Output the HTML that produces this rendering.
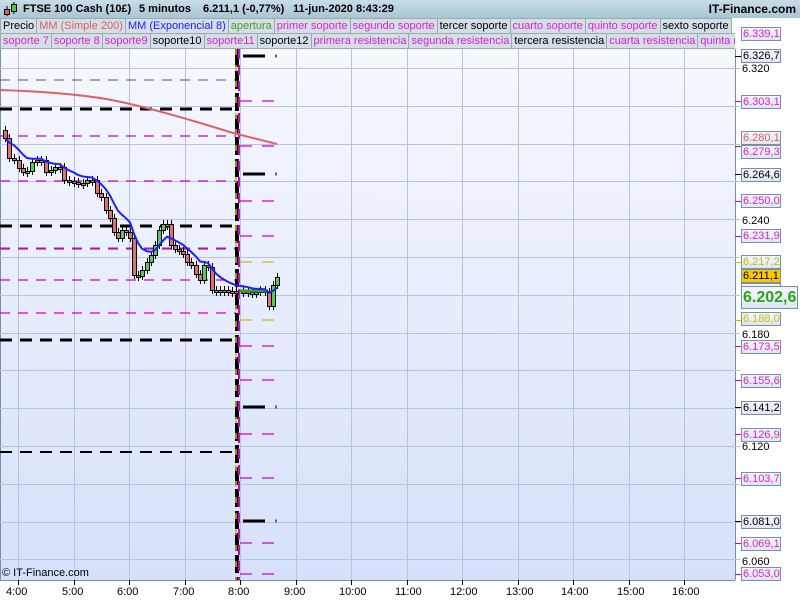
<!DOCTYPE html>
<html><head><meta charset="utf-8"><style>
*{margin:0;padding:0;box-sizing:border-box}
body{width:800px;height:600px;overflow:hidden;background:#fff;font-family:"Liberation Sans",sans-serif;position:relative}
#hdr{position:absolute;left:0;top:0;width:800px;height:18px;background:linear-gradient(#c9dde6,#a9c6d3);font-size:11px;font-weight:bold;line-height:18px}
#hdr b{position:absolute;white-space:nowrap}
.row{position:absolute;left:0;height:16px;white-space:nowrap;font-size:11px;line-height:14px}
.row span{display:inline-block;border:1px solid #9aaab4;background:#d3dfe5;padding:0 2px 0 2px;margin-right:-1px;height:16px}
.m{color:#e020d0}.k{color:#000}
.lab{position:absolute;left:741px;width:40px;height:14px;border:1px solid #7890a0;background:linear-gradient(#f2f5fb,#dfe6f5);font-size:11px;line-height:12px;padding-left:1px;white-space:nowrap;overflow:hidden}
.tick{position:absolute;left:742px;font-size:11px;line-height:12px}
.t{position:absolute;top:586px;font-size:11px}
</style></head><body>
<div id="hdr">
<svg style="position:absolute;left:3px;top:1px" width="14" height="16"><line x1="4" y1="5" x2="4" y2="15" stroke="#000"/><rect x="1.5" y="8.5" width="5" height="5" fill="#e06060" stroke="#000"/><line x1="11" y1="1" x2="11" y2="13" stroke="#000"/><rect x="8.5" y="3.5" width="5" height="7" fill="#40d040" stroke="#000"/></svg>
<b style="left:23px">FTSE 100 Cash (10£)</b><b style="left:139px">5 minutos</b><b style="left:203px">6.211,1 (-0,77%)</b><b style="left:293px">11-jun-2020 8:43:29</b>
<b style="right:4px;font-size:12px">IT-Finance.com</b></div>
<div class="row" style="top:18px"><span class="k">Precio</span><span style="color:#e06060">MM (Simple 200)</span><span style="color:#2020ff">MM (Exponencial 8)</span><span style="color:#40a020">apertura</span><span class="m">primer soporte</span><span class="m">segundo soporte</span><span class="k">tercer soporte</span><span class="m">cuarto soporte</span><span class="m">quinto soporte</span><span class="k">sexto soporte</span></div>
<div class="row" style="top:33px;width:735px;overflow:hidden"><span class="m">soporte 7</span><span class="m">soporte 8</span><span class="m">soporte9</span><span class="k">soporte10</span><span class="m">soporte11</span><span class="k">soporte12</span><span class="m">primera resistencia</span><span class="m">segunda resistencia</span><span class="k">tercera resistencia</span><span class="m">cuarta resistencia</span><span class="m">quinta resistencia</span></div>
<svg id="ch" style="position:absolute;left:0;top:49px" width="800" height="551">
<defs><linearGradient id="bg" x1="0" y1="0" x2="0" y2="1"><stop offset="0" stop-color="#f6f8fd"/><stop offset="1" stop-color="#d6e0fa"/></linearGradient></defs>
<rect x="0" y="0" width="735" height="531" fill="url(#bg)"/>
<line x1="735.5" y1="0" x2="735.5" y2="531" stroke="#7890a0"/>
<line x1="0" y1="531.5" x2="735" y2="531.5" stroke="#7890a0"/>
<line x1="0.5" y1="0" x2="0.5" y2="531" stroke="#7890a0"/>
<g id="grid" stroke="#b8c4dc" stroke-width="1"></g>
<g id="lv"></g>
<g id="cd"></g>
</svg>
<div class="lab m" style="top:27px">6.339,1</div>
<div class="lab k" style="top:49px">6.326,7</div>
<div class="tick" style="top:63px">6.320</div>
<div class="lab m" style="top:95px">6.303,1</div>
<div class="lab" style="top:131px;color:#e06060">6.280,1</div>
<div class="lab m" style="top:145px">6.279,3</div>
<div class="lab k" style="top:168px">6.264,6</div>
<div class="lab m" style="top:194px">6.250,0</div>
<div class="tick" style="top:215px">6.240</div>
<div class="lab m" style="top:229px">6.231,9</div>
<div class="lab" style="top:255px;color:#c8c000">6.217,2</div>
<div class="lab k" style="top:269px;background:#f8c800">6.211,1</div>
<div class="lab" style="top:283px;color:#2020ff;height:6px;overflow:hidden"></div>
<div class="lab" style="top:286px;width:57px;height:23px;font-size:16px;line-height:21px;font-weight:bold;color:#30a020">6.202,6</div>
<div class="lab" style="top:312px;color:#c8c000">6.188,0</div>
<div class="tick" style="top:329px">6.180</div>
<div class="lab m" style="top:340px">6.173,5</div>
<div class="lab m" style="top:374px">6.155,6</div>
<div class="lab k" style="top:401px">6.141,2</div>
<div class="lab m" style="top:428px">6.126,9</div>
<div class="tick" style="top:441px">6.120</div>
<div class="lab m" style="top:472px">6.103,7</div>
<div class="lab k" style="top:515px">6.081,0</div>
<div class="lab m" style="top:537px">6.069,1</div>
<div class="tick" style="top:556px">6.060</div>
<div class="lab m" style="top:567px">6.053,0</div>
<div style="position:absolute;left:2px;top:567px;font-size:11px">© IT-Finance.com</div>
<div id="tl"></div>
<script>
var ns="http://www.w3.org/2000/svg";
function el(p,t,a){var e=document.createElementNS(ns,t);for(var k in a)e.setAttribute(k,a[k]);p.appendChild(e);return e}
var g=document.getElementById('grid'),lv=document.getElementById('lv'),cd=document.getElementById('cd');
var xs=[18,74,129,185,240,296,351,407,462,518,573,629,684],lb=['4:00','5:00','6:00','7:00','8:00','9:00','10:00','11:00','12:00','13:00','14:00','15:00','16:00'];
var tl=document.getElementById('tl'),h='';
xs.forEach(function(x,i){el(g,'line',{x1:x+.5,y1:0,x2:x+.5,y2:531});el(g,'line',{x1:x+.5,y1:531,x2:x+.5,y2:536,stroke:'#000'});h+='<div class="t" style="left:'+(x-12)+'px">'+lb[i]+'</div>'});
tl.innerHTML=h;
for(var i=0;i<14;i++){var y=20+i*37.8;el(g,'line',{x1:0,y1:y.toFixed(0)-.5,x2:740,y2:y.toFixed(0)-.5});}
function Y(y){return y-49}
[[109,'#000',3,'12 8'],[226,'#000',3,'12 8'],[340,'#000',3,'12 8'],[452,'#000',2,'12 8'],[80,'#555',1,'10 8'],[248,'#555',1,'10 8'],[313,'#555',1,'10 8'],[136,'#d000d0',1.2,'10 8'],[181,'#d000d0',1.2,'10 8'],[249,'#d000d0',1.2,'10 8'],[280,'#d000d0',1.2,'10 8'],[313,'#d000d0',1.2,'10 8']].forEach(function(l){el(lv,'line',{x1:0,y1:Y(l[0]),x2:236,y2:Y(l[0]),stroke:l[1],'stroke-width':l[2],'stroke-dasharray':l[3]})});
[[33,'m'],[101,'m'],[146,'m'],[201,'m'],[236,'m'],[346,'m'],[380,'m'],[434,'m'],[478,'m'],[543,'m'],[574,'m'],[56,'k'],[174,'k'],[407,'k'],[521,'k'],[262,'y'],[320,'y']].forEach(function(l){var y=Y(l[0]);
 if(l[1]=='k'){el(lv,'line',{x1:243,y1:y,x2:265,y2:y,stroke:'#000','stroke-width':3});el(lv,'line',{x1:275,y1:y,x2:277,y2:y,stroke:'#666','stroke-width':3});}
 else el(lv,'line',{x1:240,y1:y,x2:278,y2:y,stroke:l[1]=='m'?'#d000d0':'#c8c000','stroke-width':1.2,'stroke-dasharray':'12 10'});
 el(lv,'line',{x1:735,y1:y+.5,x2:741,y2:y+.5,stroke:l[1]=='m'?'#d000d0':(l[1]=='y'?'#c8c000':'#000')});});
el(lv,'line',{x1:237,y1:0,x2:237,y2:531,stroke:'#000','stroke-width':4,'stroke-dasharray':'18 4'});
el(lv,'line',{x1:236,y1:0,x2:236,y2:531,stroke:'#c8c000','stroke-width':1.5,'stroke-dasharray':'6 10'});
el(lv,'line',{x1:239,y1:0,x2:239,y2:531,stroke:'#d000d0','stroke-width':2,'stroke-dasharray':'10 6'});
el(lv,'path',{d:'M0 '+Y(90)+' Q60 '+Y(92)+' 100 '+Y(98)+' T233 '+Y(133)+' L277 '+Y(144),fill:'none',stroke:'#e06060','stroke-width':2});
var c=[[5,138],[9,158],[14,160],[19,168],[23,172],[27,171],[32,162],[37,160],[41,160],[46,172],[51,170],[55,167],[60,167],[64,180],[69,181],[74,182],[78,184],[83,183],[87,180],[92,180],[97,193],[101,197],[106,210],[110,218],[114,232],[118,238],[122,230],[126,232],[130,238],[134,275],[138,276],[142,270],[147,262],[151,255],[155,245],[159,230],[163,224],[167,224],[171,245],[175,249],[179,251],[183,254],[187,262],[191,265],[196,274],[200,280],[204,265],[208,267],[212,290],[216,292],[220,290],[224,290],[228,291],[232,291],[236,291],[243,291],[248,292],[252,293],[256,292],[260,290],[265,292],[269,306],[273,285],[277,277]];
var p=130;
c.forEach(function(d){var x=d[0],o=p,cl=d[1];var t=Math.min(o,cl),b=Math.max(o,cl);if(b-t<2)b=t+2;
 el(cd,'line',{x1:x+.5,y1:Y(t-4),x2:x+.5,y2:Y(b+4),stroke:'#000'});
 el(cd,'rect',{x:x-1.5,y:Y(t)+.5,width:4,height:b-t,fill:cl<o?'#50d050':'#e07070',stroke:'#000','stroke-width':1});p=cl;});
el(cd,'line',{x1:240,y1:Y(291),x2:268,y2:Y(291),stroke:'#30a020','stroke-width':3});
var e=c[0][1],d='';c.forEach(function(q,i){e=e+(q[1]-e)*0.22;d+=(i?'L':'M')+q[0]+' '+Y(e+(i<2?0:-1)).toFixed(1)});
el(cd,'path',{d:d,fill:'none',stroke:'#2020ff','stroke-width':2});
</script>
</body></html>
